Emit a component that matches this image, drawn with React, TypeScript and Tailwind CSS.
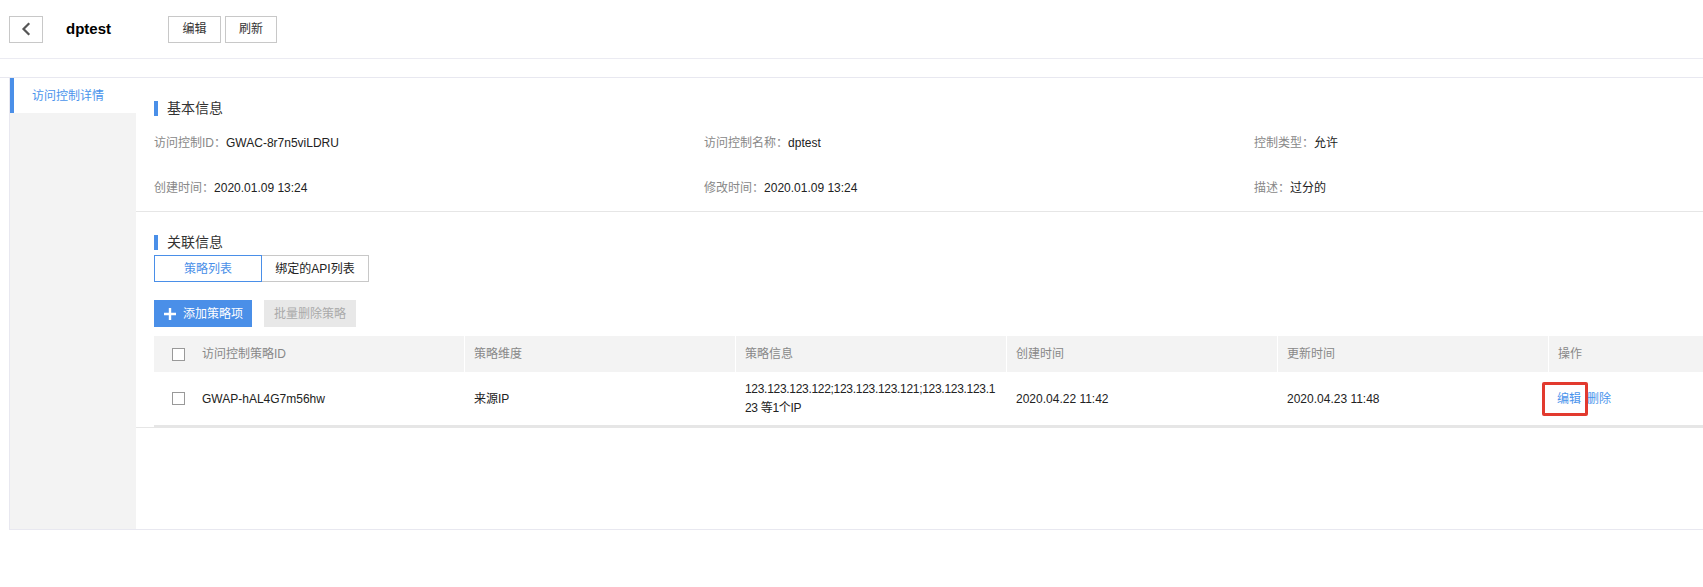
import React from 'react';

const font = "font-['Liberation_Sans','Noto_Sans_CJK_SC',sans-serif]";

const SectionTitle: React.FC<{ title: string }> = ({ title }) => (
  <div className="flex items-center h-[15px]">
    <span className="w-[4px] h-[15px] bg-[#4a8fe8]" />
    <span className="ml-[9px] text-[14px] leading-[15px] text-[#333]">{title}</span>
  </div>
);

const Field: React.FC<{ label: string; value: string }> = ({ label, value }) => (
  <div className="h-[20px] leading-[20px] whitespace-nowrap">
    <span className="text-[#888]">{label}：</span>
    <span className="text-[#222]">{value}</span>
  </div>
);

const Checkbox = () => <span className="block w-[13px] h-[13px] border border-[#999] bg-white" />;

const headers = ['策略维度', '策略信息', '创建时间', '更新时间', '操作'];

export default function App() {
  return (
    <div className={`w-[1703px] h-[587px] overflow-hidden bg-white text-[12px] ${font}`}>
      {/* Top bar */}
      <header className="h-[59px] border-b border-[#ebebf2] flex items-center">
        <button className="ml-[9px] w-[34px] h-[27px] border border-[#c8c8c8] flex items-center justify-center">
          <svg width="14" height="16" viewBox="0 0 14 16" fill="none">
            <path d="M9.5 3L4.5 8L9.5 13" stroke="#555" strokeWidth="2.2" strokeLinecap="square" />
          </svg>
        </button>
        <div className="ml-[23px] w-[102px] text-[15px] font-bold text-black">dptest</div>
        <div className="flex gap-[4px]">
          <button className="w-[53px] h-[27px] border border-[#c8c8c8] text-[#333]">编辑</button>
          <button className="w-[52px] h-[27px] border border-[#c8c8c8] text-[#333]">刷新</button>
        </div>
      </header>

      <div className="mt-[18px] border-t border-[#e8e8f0]">
        <div className="ml-[9px] h-[452px] border-l border-b border-[#e8e8f0] flex">
          {/* Sidebar */}
          <aside className="w-[126px] flex flex-col">
            <div className="h-[35px] flex items-center bg-white">
              <span className="w-[4px] h-[35px] bg-[#4a8fe8]" />
              <span className="ml-[18px] text-[#4a94ec]">访问控制详情</span>
            </div>
            <div className="flex-1 bg-[#f3f3f3]" />
          </aside>

          {/* Main */}
          <main className="flex-1 min-w-0">
            <div className="border-b border-[#e6e6e6]">
              {/* Basic info */}
              <section className="pl-[18px] pt-[23px] pb-[13px] border-b border-[#e6e6e6]">
                <SectionTitle title="基本信息" />
                <div className="mt-[17px] grid grid-cols-[550px_550px_550px] gap-y-[25px]">
                  <Field label="访问控制ID" value="GWAC-8r7n5viLDRU" />
                  <Field label="访问控制名称" value="dptest" />
                  <Field label="控制类型" value="允许" />
                  <Field label="创建时间" value="2020.01.09 13:24" />
                  <Field label="修改时间" value="2020.01.09 13:24" />
                  <Field label="描述" value="过分的" />
                </div>
              </section>

              {/* Related info */}
              <section className="pl-[18px] pt-[23px]">
                <SectionTitle title="关联信息" />
                <div className="mt-[5px] flex">
                  <button className="w-[108px] h-[27px] border border-[#4a8fe8] text-[#4a8fe8]">策略列表</button>
                  <button className="w-[107px] h-[27px] border border-l-0 border-[#c8c8c8] text-[#222]">绑定的API列表</button>
                </div>
                <div className="mt-[18px] flex gap-[12px]">
                  <button className="w-[98px] h-[27px] bg-[#4a8fe8] text-white flex items-center pl-[10px]">
                    <svg width="12" height="12" viewBox="0 0 12 12">
                      <path d="M6 0V12M0 6H12" stroke="white" strokeWidth="2.4" />
                    </svg>
                    <span className="ml-[7px]">添加策略项</span>
                  </button>
                  <button className="w-[92px] h-[27px] bg-[#e8e8e8] text-[#aaa]">批量删除策略</button>
                </div>

                {/* Table */}
                <div className="mt-[9px] w-[1665px]">
                  <div className="h-[36px] grid grid-cols-[310px_271px_271px_271px_271px_271px] bg-[#f3f3f3] text-[#888]">
                    <div className="flex items-center pl-[18px]">
                      <Checkbox />
                      <span className="ml-[17px]">访问控制策略ID</span>
                    </div>
                    {headers.map((h) => (
                      <div key={h} className="flex items-center pl-[9px] border-l border-white">
                        {h}
                      </div>
                    ))}
                  </div>
                  <div className="h-[55px] grid grid-cols-[310px_271px_271px_271px_271px_271px] border-b-2 border-[#e6e6e6] text-[#222]">
                    <div className="flex items-center pl-[18px]">
                      <Checkbox />
                      <span className="ml-[17px]">GWAP-hAL4G7m56hw</span>
                    </div>
                    <div className="flex items-center pl-[10px]">来源IP</div>
                    <div className="flex items-center pl-[10px] leading-[19px] tracking-[-0.3px] whitespace-nowrap">
                      <span>
                        123.123.123.122;123.123.123.121;123.123.123.1
                        <br />
                        23 等1个IP
                      </span>
                    </div>
                    <div className="flex items-center pl-[10px]">2020.04.22 11:42</div>
                    <div className="flex items-center pl-[10px]">2020.04.23 11:48</div>
                    <div className="relative flex items-center pl-[9px] gap-[6px] text-[#4a94ec]">
                      <span>编辑</span>
                      <span>删除</span>
                      <span className="absolute left-[-6px] top-[10px] w-[46px] h-[34px] border-[3px] border-[#e23a2e] rounded-[2px]" />
                    </div>
                  </div>
                </div>
              </section>
            </div>
          </main>
        </div>
      </div>
    </div>
  );
}
